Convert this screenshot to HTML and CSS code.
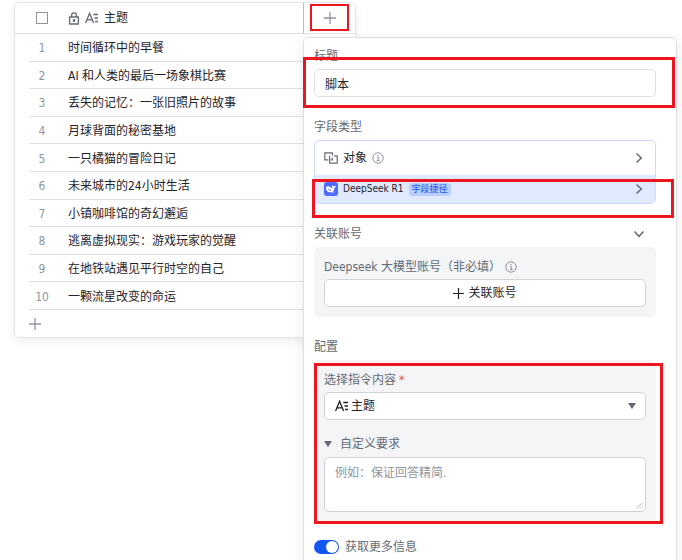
FILE: index.html
```html
<!DOCTYPE html>
<html lang="zh-CN">
<head>
<meta charset="utf-8">
<meta name="viewport" content="width=device-width, initial-scale=1">
<title>主题</title>
<link rel="stylesheet" href="styles.css">
</head>
<body>
<svg class="sprite" aria-hidden="true">
  <symbol id="plus" viewBox="0 0 12 12"><path d="M6 0v12M0 6h12" fill="none" stroke="currentColor" stroke-width="1.3"/></symbol>
  <symbol id="text-type" viewBox="0 0 14 12"><path d="M.6 11L4.600 1.200 8.600 11M2 7.800h5.200" fill="none" stroke="currentColor" stroke-width="1.300"/><path d="M8.300 2.500H13M9.500 6H13M10 9.500h3" fill="none" stroke="currentColor" stroke-width="1.400"/></symbol>
  <symbol id="chevron" viewBox="0 0 12 12"><path d="M3.5 1.5L8.3 6l-4.8 4.5" fill="none" stroke="currentColor" stroke-width="1.5"/></symbol>
  <symbol id="info" viewBox="0 0 12 12"><circle cx="6" cy="6" r="5.2" fill="none" stroke="currentColor"/><path d="M5 5.2h1.2v3.3M4.7 8.6h3" fill="none" stroke="currentColor"/><circle cx="6" cy="3.4" r=".7" fill="currentColor"/></symbol>
</svg>
<main class="page">
  <section class="sheet">
    <table class="grid">
      <thead>
        <tr>
          <th class="edge"></th>
          <th class="num"><input class="check" type="checkbox" aria-label="全选"></th>
          <th class="name">
            <span class="name-head">
              <svg class="lock" viewBox="0 0 12 13"><path d="M1.6 5h8.8v7H1.6zM3.6 5V3.2a2.4 2.4 0 0 1 4.8 0V5" fill="none" stroke="currentColor" stroke-width="1.3" stroke-linejoin="round"/><path d="M4.8 7.2h2.4v2.6H4.8z" fill="currentColor"/></svg>
              <svg class="type-icon muted"><use href="#text-type"/></svg>
              主题
            </span>
          </th>
          <th class="add">
            <button class="icon-button" type="button" aria-label="+"><svg class="plus"><use href="#plus"/></svg></button>
            <span class="mark mark-add"></span>
          </th>
        </tr>
      </thead>
      <tbody>
        <tr><td class="edge"></td><td class="num">1</td><td class="name">时间循环中的早餐</td><td></td></tr>
        <tr><td class="edge"></td><td class="num">2</td><td class="name">AI 和人类的最后一场象棋比赛</td><td></td></tr>
        <tr><td class="edge"></td><td class="num">3</td><td class="name">丢失的记忆：一张旧照片的故事</td><td></td></tr>
        <tr><td class="edge"></td><td class="num">4</td><td class="name">月球背面的秘密基地</td><td></td></tr>
        <tr><td class="edge"></td><td class="num">5</td><td class="name">一只橘猫的冒险日记</td><td></td></tr>
        <tr><td class="edge"></td><td class="num">6</td><td class="name">未来城市的24小时生活</td><td></td></tr>
        <tr><td class="edge"></td><td class="num">7</td><td class="name">小镇咖啡馆的奇幻邂逅</td><td></td></tr>
        <tr><td class="edge"></td><td class="num">8</td><td class="name">逃离虚拟现实：游戏玩家的觉醒</td><td></td></tr>
        <tr><td class="edge"></td><td class="num">9</td><td class="name">在地铁站遇见平行时空的自己</td><td></td></tr>
        <tr><td class="edge"></td><td class="num">10</td><td class="name">一颗流星改变的命运</td><td></td></tr>
      </tbody>
    </table>
    <button class="add-row" type="button" aria-label="+"><svg class="plus"><use href="#plus"/></svg></button>
  </section>

  <form class="panel">
    <section class="group">
      <label class="label" for="title">标题</label>
      <div class="marked">
        <input class="control" id="title" type="text" value="脚本">
        <span class="mark mark-title"></span>
      </div>
    </section>

    <section class="group">
      <span class="label">字段类型</span>
      <div class="types">
        <button class="type" type="button">
          <svg class="object-icon" viewBox="0 0 14 12"><path d="M4.300 7.900H.8V.8h7.600v2.800M5.600 5.800V3.800M8.400 5.800v2.100H6.800M10 3.800h3.200v7.400H5.600V5.800" fill="none" stroke="currentColor" stroke-width="1.200" stroke-linejoin="round"/></svg>
          <span>对象</span>
          <svg class="icon info"><use href="#info"/></svg>
          <svg class="icon end"><use href="#chevron"/></svg>
        </button>
        <div class="marked">
          <button class="type selected" type="button">
            <svg class="logo" viewBox="0 0 14 14"><rect width="14" height="14" rx="3" fill="#4d6bfe"/><path d="M2 5.2C2.8 4 4.7 3.8 6.2 5c1 .8 1.700 1.100 2.500.9-.9-.9-.8-1.800-.5-2.600.6.8 1.300 1 2 .9.7-.1 1.100-.4 1.800-.5-.2 1.200-.7 1.800-1.600 2.100.1 1.800-.4 3-1.400 3.900.3.300.7.4 1 .5-1 .5-2 .3-2.700 0C4.300 10.900 1.700 8.500 2 5.200z" fill="#fff"/><path d="M4.200 6.700c1.300-.1 2 1.100 3.200 2.200-1.300.2-2.800-.7-3.200-2.200z" fill="#4d6bfe"/></svg>
            <span class="product">DeepSeek R1</span>
            <span class="badge">字段捷径</span>
            <svg class="icon end"><use href="#chevron"/></svg>
          </button>
          <span class="mark mark-type"></span>
        </div>
      </div>
    </section>

    <section class="group">
      <div class="label split">关联账号<svg class="icon down"><use href="#chevron"/></svg></div>
      <div class="box">
        <div class="box-label account-label">Deepseek 大模型账号（非必填）<svg class="icon info"><use href="#info"/></svg></div>
        <button class="control link-account" type="button"><svg class="small-plus"><use href="#plus"/></svg>关联账号</button>
      </div>
    </section>

    <section class="group">
      <span class="label">配置</span>
      <div class="box marked">
        <label class="box-label" for="source">选择指令内容<span class="required">*</span></label>
        <div class="select-wrap">
          <svg class="type-icon select-icon"><use href="#text-type"/></svg>
          <select class="control select" id="source"><option>主题</option></select>
          <span class="caret select-caret"></span>
        </div>
        <details class="custom" open>
          <summary class="summary"><span class="caret"></span><span id="custom-label">自定义要求</span></summary>
          <div class="area-wrap">
            <textarea class="control area" aria-labelledby="custom-label" placeholder="例如：保证回答精简."></textarea>
            <svg class="grip" viewBox="0 0 7 7"><path d="M.5 6.500l6-6M4 6.500L6.500 4" fill="none" stroke="currentColor"/></svg>
          </div>
        </details>
        <span class="mark mark-config"></span>
      </div>
    </section>

    <label class="more"><input class="switch" type="checkbox" checked>获取更多信息</label>
  </form>
</main>
</body>
</html>
```

FILE: styles.css
```css
* { box-sizing: border-box; }

body {
  margin: 0;
  background: #fff;
  color: #1f2329;
  font: 12px/20px "DejaVu Sans Condensed", "Noto Sans CJK SC", sans-serif;
}

button, input, select, textarea { font: inherit; color: inherit; }
button { padding: 0; border: 0; background: none; }
svg { display: block; flex: none; }

.sprite { position: absolute; width: 0; height: 0; }

.page {
  position: relative;
  min-height: 100vh;
  max-height: 100vh;
  overflow: hidden;
  padding: 2px 0 0 14px;
}

/* Sheet */
.sheet {
  width: calc(50% + 8px);
  border: 1px solid #e4e5e8;
  border-radius: 5px;
  box-shadow: 0 4px 10px rgba(31, 35, 41, 0.07);
}

.grid {
  width: 100%;
  height: 307px;
  table-layout: fixed;
  border-collapse: separate;
  border-spacing: 0;
}

.grid th, .grid td {
  padding: 0;
  font-weight: normal;
  text-align: left;
  border-bottom: 1px solid #dee0e3;
}
.grid th { height: 31px; }
.grid td { padding-top: 2px; }
.grid td:last-child, .grid td.edge { border-bottom: 0; }
.grid .edge { width: 14px; }
.grid .num { width: 26px; text-align: center; }
.grid td.num { color: #8f959e; }
.grid .name { padding-left: 13px; white-space: nowrap; }
.grid .add { position: relative; width: 52px; border-left: 1px solid #bbbfc4; }

.name-head { display: flex; align-items: center; gap: 5px; }
.lock { width: 12px; height: 13px; color: #646a73; }
.type-icon { width: 14px; height: 12px; }
.muted { color: #646a73; }

.check {
  display: block;
  appearance: none;
  width: 12px;
  height: 12px;
  margin: 0 auto;
  border: 1px solid #8f959e;
}

.icon-button { display: flex; justify-content: center; width: 100%; }
.plus { width: 12px; height: 12px; color: #8f959e; }
.add-row { display: flex; align-items: center; height: 27px; padding-left: 14px; }

/* Field panel */
.panel {
  position: absolute;
  top: 37px;
  right: 5px;
  left: calc(50% - 38px);
  display: flex;
  flex-direction: column;
  gap: 20px;
  padding: 8px 20px 20px 10px;
  border: 1px solid #dee0e3;
  border-radius: 5px;
  background: #fff;
  box-shadow: 0 4px 12px rgba(31, 35, 41, 0.1);
}

.group { display: flex; flex-direction: column; gap: 3px; }
.label { color: #646a73; }
.split { display: flex; align-items: center; justify-content: space-between; padding-right: 11px; }
.marked { position: relative; }

.control {
  display: block;
  width: 100%;
  height: 28px;
  margin: 0;
  padding: 0 10px;
  border: 1px solid #d0d3d6;
  border-radius: 5px;
  background: #fff;
  outline: 0;
}
#title { border-color: #dee0e3; }

.icon { width: 12px; height: 12px; color: #646a73; }
.info { color: #8f959e; }
.down { transform: rotate(90deg); }
.end { margin-left: auto; }

.types { border: 1px solid #cbd9ff; border-radius: 5px; }
.type {
  display: flex;
  align-items: center;
  gap: 5px;
  width: 100%;
  height: 34px;
  padding: 0 10px 0 9px;
}
.selected { height: 28px; border-radius: 0 0 4px 4px; background: #e1e9ff; }
.object-icon { width: 14px; height: 12px; color: #646a73; }
.logo { width: 14px; height: 14px; }
.product { font-size: 10px; }
.badge {
  padding: 0 3px;
  border-radius: 3px;
  background: #bacefd;
  color: #0c52f0;
  font-size: 9px;
  line-height: 13px;
}

.box { padding: 10px; border-radius: 5px; background: #f4f5f7; }
.box-label { display: flex; align-items: center; gap: 3px; margin-bottom: 2px; color: #646a73; }
.account-label { gap: 4px; }
.required { color: #f54a45; }
.link-account { display: flex; align-items: center; justify-content: center; gap: 4px; }
.small-plus { width: 11px; height: 11px; }

.select-wrap { position: relative; }
.select { appearance: none; padding-left: 26px; }
.select-icon { position: absolute; top: 8px; left: 11px; }
.caret {
  width: 8px;
  height: 6px;
  background: #646a73;
  clip-path: polygon(0 0, 100% 0, 50% 100%);
}
.select-caret { position: absolute; top: 11px; right: 10px; }

.custom { margin-top: 14px; }
.summary {
  display: flex;
  align-items: center;
  gap: 8px;
  margin-bottom: 3px;
  color: #646a73;
  list-style: none;
}
.area-wrap { position: relative; }
.area { height: 55px; padding-top: 5px; resize: none; }
.area::placeholder { color: #8f959e; }
.grip { position: absolute; right: 3px; bottom: 3px; width: 7px; height: 7px; color: #bbbfc4; }

.more { display: flex; align-items: center; gap: 6px; margin-top: -5px; color: #646a73; }
.switch {
  appearance: none;
  display: flex;
  align-items: center;
  justify-content: flex-end;
  width: 25px;
  height: 14px;
  margin: 0;
  padding: 0 1px;
  border-radius: 7px;
  background: #1456f0;
}
.switch::before { content: ""; width: 12px; height: 12px; border-radius: 50%; background: #fff; }

/* Red callout frames */
.mark { position: absolute; border: 2px solid #ed1620; pointer-events: none; }
.mark-add { inset: 1px 6px 2px; }
.mark-title { inset: -12px -19px -11px -11px; border-width: 3px; }
.mark-type { inset: 4px -19px -15px -3px; border-width: 3px; }
.mark-config { inset: 3px -7px -2px 0; border-width: 3px; }
```
